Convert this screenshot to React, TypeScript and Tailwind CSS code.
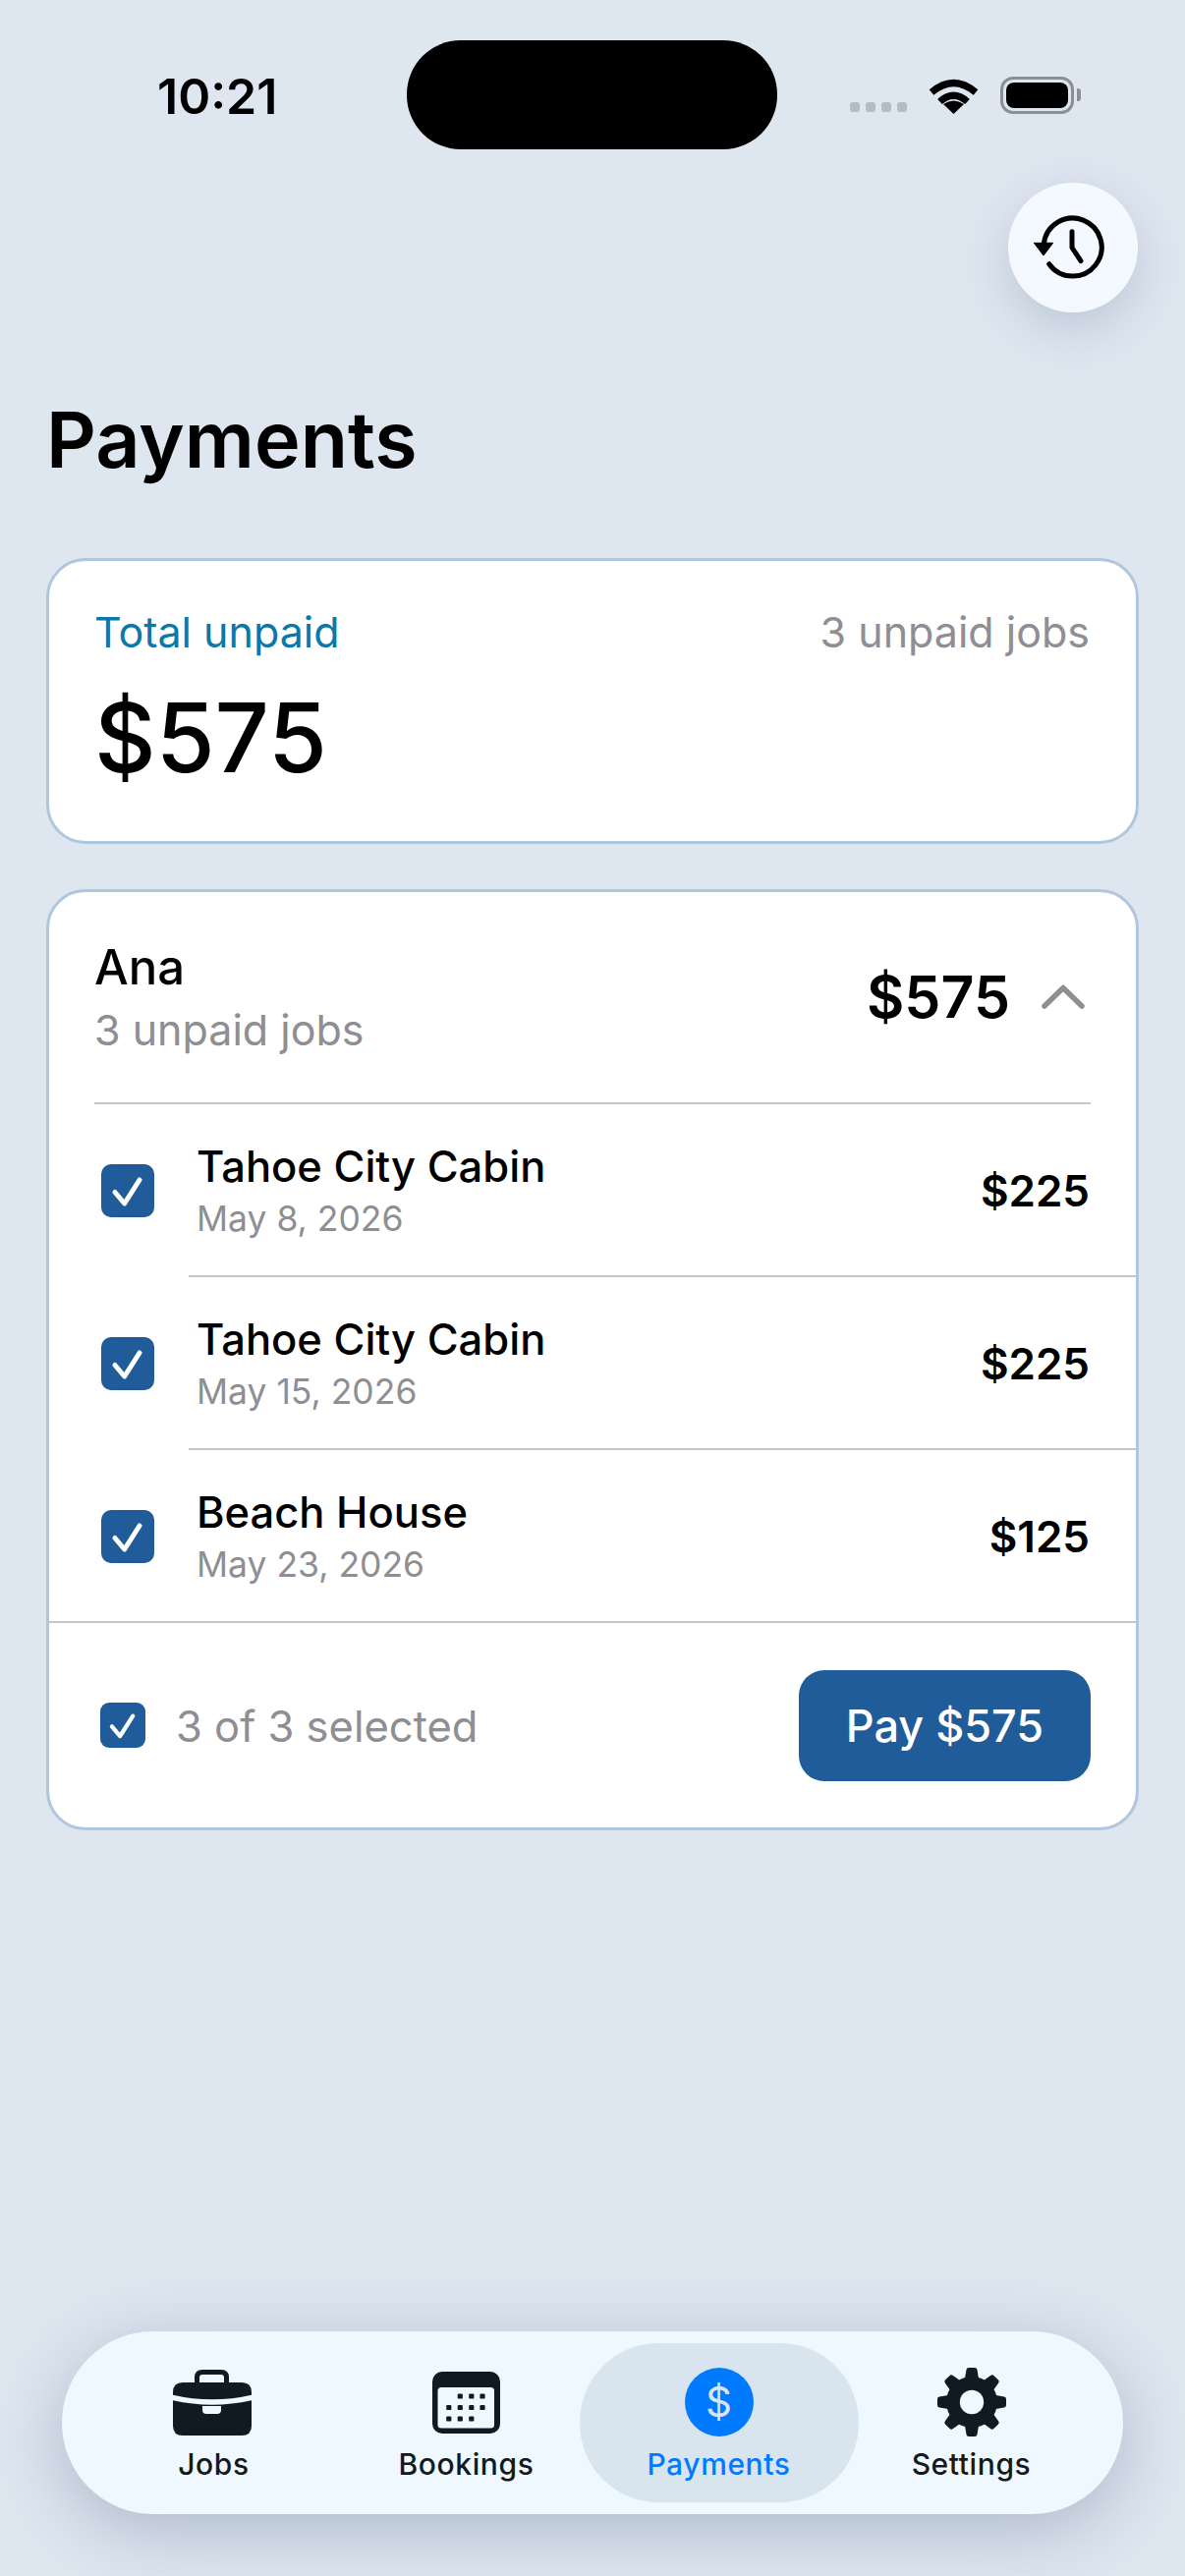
import type { ReactNode } from "react";

const jobs = [
  { name: "Tahoe City Cabin", date: "May 8, 2026", amount: "$225" },
  { name: "Tahoe City Cabin", date: "May 15, 2026", amount: "$225" },
  { name: "Beach House", date: "May 23, 2026", amount: "$125" },
];

function Check({ small }: { small?: boolean }) {
  return (
    <div
      className={
        small
          ? "flex h-[46px] w-[46px] items-center justify-center rounded-[9px] bg-[#1f5c99]"
          : "flex h-[54px] w-[54px] items-center justify-center rounded-[10px] bg-[#1f5c99]"
      }
    >
      <svg viewBox="0 0 54 54" className="h-full w-full" fill="none">
        <path
          d="M14 28.5 L23.7 40 L39 16"
          stroke="white"
          strokeWidth="5"
          strokeLinecap="round"
          strokeLinejoin="round"
        />
      </svg>
    </div>
  );
}

function HistoryIcon() {
  return (
    <svg width="132" height="132" viewBox="0 0 132 132" fill="none">
      <path
        d="M41.7 82.7 A29.5 29.5 0 1 0 36.3 63"
        stroke="black"
        strokeWidth="5"
        strokeLinecap="round"
      />
      <path d="M26.3 61.3 H45.7 L36 74 Z" fill="black" stroke="black" strokeWidth="1" strokeLinejoin="round" />
      <path
        d="M65 49.7 V66 L74 79.7"
        stroke="black"
        strokeWidth="5"
        strokeLinecap="round"
        strokeLinejoin="round"
      />
    </svg>
  );
}

function BriefcaseIcon() {
  return (
    <svg width="80" height="67" viewBox="0 0 80 67" fill="none" className="-ml-[3px]">
      <path d="M24.5 14 V8 Q24.5 2.5 30 2.5 H49 Q54.5 2.5 54.5 8 V14" stroke="#121a21" strokeWidth="5" />
      <path
        d="M10 13 H70 Q80 13 80 23 V57 Q80 67 70 67 H10 Q0 67 0 57 V23 Q0 13 10 13 Z"
        fill="#121a21"
      />
      <path d="M-2 28 Q40 38 82 28" stroke="#f0f8ff" strokeWidth="5.5" />
      <path d="M30 37 H49 V41 Q49 45 45 45 H34 Q30 45 30 41 Z" fill="#f0f8ff" />
    </svg>
  );
}

function CalendarIcon() {
  const rows = [
    { y: 25, xs: [28.3, 39.8, 51] },
    { y: 36.5, xs: [16.8, 28.3, 39.8, 51] },
    { y: 48, xs: [16.8, 28.3, 39.8] },
  ];
  return (
    <svg width="69" height="63" viewBox="0 0 69 63" fill="none">
      <rect width="69" height="63" rx="10" fill="#121a21" />
      <rect x="5.5" y="16" width="57.5" height="41.5" rx="3.5" fill="#f0f8ff" />
      {rows.map((row) =>
        row.xs.map((x) => (
          <rect key={`${row.y}-${x}`} x={x - 2.6} y={row.y - 2.6} width="5.2" height="5.2" rx="1.2" fill="#121a21" />
        )),
      )}
    </svg>
  );
}

function GearIcon() {
  const teeth = [0, 45, 90, 135, 180, 225, 270, 315];
  return (
    <svg width="72" height="72" viewBox="0 0 72 72">
      <circle cx="36" cy="36" r="26" fill="#121a21" />
      {teeth.map((deg) => (
        <path
          key={deg}
          d="M28 18 L30.5 3 Q30.8 1 33 1 H39 Q41.2 1 41.5 3 L44 18 Z"
          fill="#121a21"
          transform={`rotate(${deg} 36 36)`}
        />
      ))}
      <circle cx="36" cy="36" r="12.2" fill="#f0f8ff" />
    </svg>
  );
}

function Tab({
  icon,
  label,
  active,
}: {
  icon: ReactNode;
  label: string;
  active?: boolean;
}) {
  return (
    <div
      className={
        active
          ? "-mx-[13.5px] flex h-[162px] w-[284px] flex-col items-center rounded-[80px] bg-[#d9e5ee] pt-[24px]"
          : "flex h-[162px] w-[257px] flex-col items-center pt-[24px]"
      }
    >
      <div className="flex h-[72px] items-center justify-center">{icon}</div>
      <span
        className={
          active
            ? "mt-[9px] text-[30px] leading-[36px] font-medium tracking-[0.6px] text-[#007aff]"
            : "mt-[9px] text-[30px] leading-[36px] font-medium tracking-[0.6px] text-[#121a21]"
        }
      >
        {label}
      </span>
    </div>
  );
}

export default function App() {
  return (
    <div className="flex h-[2622px] w-[1206px] flex-col overflow-hidden bg-[#dee6f0] font-[Inter,sans-serif] text-black">
      {/* Status bar */}
      <div className="mt-[41px] flex h-[111px] shrink-0 items-center">
        <div className="mt-[2px] w-[414px] pl-[160px] text-[50px] leading-none font-semibold">10:21</div>
        <div className="h-[111px] w-[377px] rounded-[55px] bg-black" />
        <div className="flex items-center pl-[74px]">
          <div className="mt-[25px] flex gap-[6px]">
            {[0, 1, 2, 3].map((i) => (
              <div key={i} className="h-[10px] w-[10px] rounded-[3px] bg-[#b4bcc6]" />
            ))}
          </div>
          <svg width="51" height="38" viewBox="0 0 51 38" fill="none" className="ml-[22px]">
            <path d="M3 16 Q25.5 -3 48 16" stroke="black" strokeWidth="7" />
            <path d="M11.5 25.5 Q25.5 13 39.5 25.5" stroke="black" strokeWidth="7" />
            <path d="M25.5 38 L15 28 Q25.5 21 36 28 Z" fill="black" />
          </svg>
          <div className="ml-[22px] flex items-center">
            <div className="h-[38px] w-[75px] rounded-[13px] border-[3px] border-[#8b8f95] p-[3px]">
              <div className="h-full w-full rounded-[8px] bg-black" />
            </div>
            <div className="ml-[3px] h-[13px] w-[4px] rounded-r-[3px] bg-[#8b8f95]" />
          </div>
        </div>
      </div>

      {/* History button */}
      <div className="mt-[34px] flex justify-end pr-[48px]">
        <div className="h-[132px] w-[132px] rounded-full bg-[#f4f9ff] shadow-[0_16px_48px_rgba(60,80,110,0.2)]">
          <HistoryIcon />
        </div>
      </div>

      <h1 className="mt-[83px] pl-[47px] text-[79px] leading-[92px] font-semibold">Payments</h1>

      {/* Total card */}
      <div className="mx-[47px] mt-[75px] h-[291px] rounded-[40px] border-[3px] border-[#aec6de] bg-white pt-[46px] pr-[47px] pl-[46px]">
        <div className="flex items-center justify-between">
          <span className="text-[43px] leading-[52px] text-[#0a78a8]">Total unpaid</span>
          <span className="text-[43px] leading-[52px] text-[#8e8e93]">3 unpaid jobs</span>
        </div>
        <div className="mt-[27px] text-[97px] leading-[110px] font-medium">$575</div>
      </div>

      {/* Client card */}
      <div className="mx-[47px] mt-[46px] rounded-[40px] border-[3px] border-[#aec6de] bg-white">
        <div className="mr-[46px] ml-[46px] flex h-[216px] items-center justify-between border-b-2 border-[#c6c6c8] pb-[1px]">
          <div>
            <div className="text-[49px] leading-[60px] font-[450]">Ana</div>
            <div className="mt-[7px] text-[43px] leading-[52px] text-[#8e8e93]">3 unpaid jobs</div>
          </div>
          <div className="flex items-center">
            <span className="text-[59px] leading-none font-semibold">$575</span>
            <svg width="44" height="25" viewBox="0 0 44 25" fill="none" className="mr-[6px] ml-[32px]">
              <path d="M3 22 L22 3.5 L41 22" stroke="#8e8e93" strokeWidth="5.5" strokeLinecap="round" strokeLinejoin="round" />
            </svg>
          </div>
        </div>

        {jobs.map((job, i) => (
          <div key={job.date} className="relative flex h-[176px] items-center pr-[47px] pl-[53px]">
            <div
              className={
                i < 2
                  ? "absolute right-0 bottom-0 left-[142px] h-[2px] bg-[#c6c6c8]"
                  : "absolute right-0 bottom-0 left-0 h-[2px] bg-[#c6c6c8]"
              }
            />
            <Check />
            <div className="ml-[43px] flex-1 pb-[2px]">
              <div className="text-[43.5px] leading-[54px] font-medium">{job.name}</div>
              <div className="mt-[5px] text-[35.5px] leading-[44px] text-[#8e8e93]">{job.date}</div>
            </div>
            <span className="text-[44px] leading-none font-semibold">{job.amount}</span>
          </div>
        ))}

        <div className="flex h-[208px] items-center pr-[46px] pl-[52px]">
          <Check small />
          <span className="mt-[2px] ml-[31px] flex-1 text-[43.5px] leading-[56px] text-[#8e8e93]">3 of 3 selected</span>
          <div className="flex h-[113px] w-[297px] items-center justify-center rounded-[26px] bg-[#1f5c99] text-[45px] leading-none font-medium text-white">
            Pay $575
          </div>
        </div>
      </div>

      {/* Tab bar */}
      <div className="mx-[63px] mt-auto mb-[63px] flex h-[186px] items-center rounded-[93px] bg-[#f0f8ff] px-[26px] shadow-[0_16px_70px_rgba(50,70,100,0.28)]">
        <Tab icon={<BriefcaseIcon />} label="Jobs" />
        <Tab icon={<CalendarIcon />} label="Bookings" />
        <Tab
          active
          label="Payments"
          icon={
            <div className="flex h-[70px] w-[70px] items-center justify-center rounded-full bg-[#007aff] text-[42px] leading-none text-[#d9e5ee]">
              $
            </div>
          }
        />
        <Tab icon={<GearIcon />} label="Settings" />
      </div>
    </div>
  );
}
